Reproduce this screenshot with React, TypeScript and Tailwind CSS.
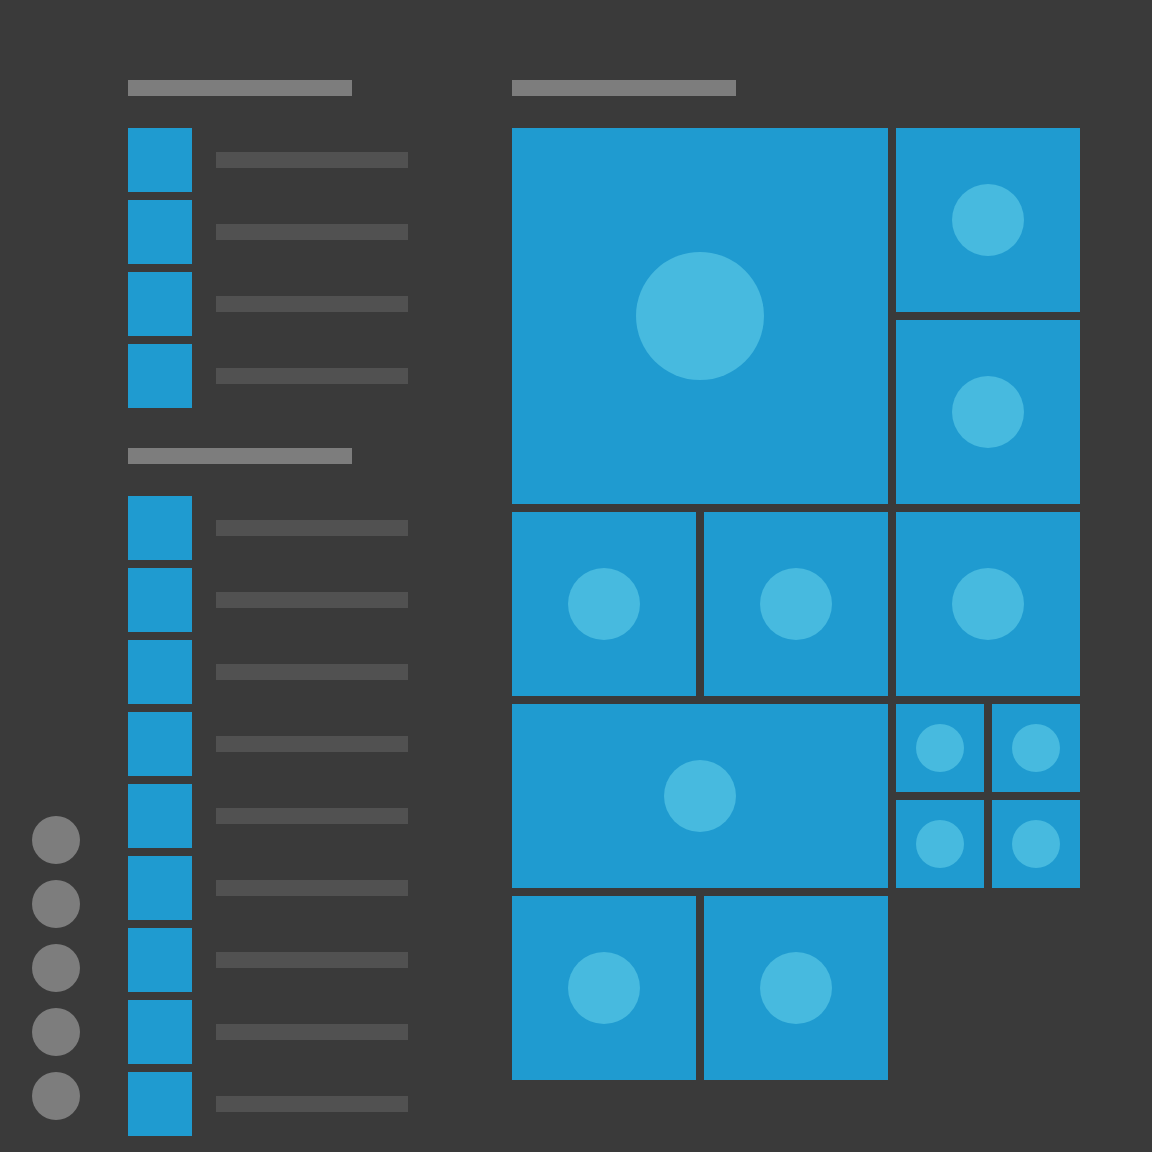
const tile = 'bg-[#1f9bd0] flex items-center justify-center'
const dot = 'rounded-full bg-[#47badf]'

function ListItem() {
  return (
    <div className="flex items-center gap-6">
      <div className="size-16 bg-[#1f9bd0]" />
      <div className="h-4 w-48 bg-[#515151]" />
    </div>
  )
}

function Tile({ className = '', dotSize = 'size-[72px]' }: { className?: string; dotSize?: string }) {
  return (
    <div className={`${tile} ${className}`}>
      <div className={`${dot} ${dotSize}`} />
    </div>
  )
}

export default function App() {
  return (
    <div className="flex h-[1152px] w-[1152px] overflow-hidden bg-[#3a3a3a]">
      {/* rail */}
      <div className="flex w-[128px] shrink-0 flex-col justify-end gap-4 pb-8 pl-8">
        {[0, 1, 2, 3, 4].map((i) => (
          <div key={i} className="size-12 rounded-full bg-[#7d7d7d]" />
        ))}
      </div>

      {/* app list */}
      <div className="w-[384px] shrink-0 pt-20">
        <div className="h-4 w-[224px] bg-[#7d7d7d]" />
        <div className="mt-8 flex flex-col gap-2">
          {[0, 1, 2, 3].map((i) => (
            <ListItem key={i} />
          ))}
        </div>
        <div className="mt-10 h-4 w-[224px] bg-[#7d7d7d]" />
        <div className="mt-8 flex flex-col gap-2">
          {[0, 1, 2, 3, 4, 5, 6, 7, 8].map((i) => (
            <ListItem key={i} />
          ))}
        </div>
      </div>

      {/* tiles */}
      <div className="pt-20">
        <div className="h-4 w-[224px] bg-[#7d7d7d]" />
        <div className="mt-8 grid grid-cols-[repeat(3,184px)] auto-rows-[184px] gap-2">
          <Tile className="col-span-2 row-span-2" dotSize="size-32" />
          <Tile />
          <Tile />
          <Tile />
          <Tile />
          <Tile />
          <Tile className="col-span-2" />
          <div className="grid grid-cols-2 grid-rows-2 gap-2">
            {[0, 1, 2, 3].map((i) => (
              <Tile key={i} dotSize="size-12" />
            ))}
          </div>
          <Tile />
          <Tile />
        </div>
      </div>
    </div>
  )
}
